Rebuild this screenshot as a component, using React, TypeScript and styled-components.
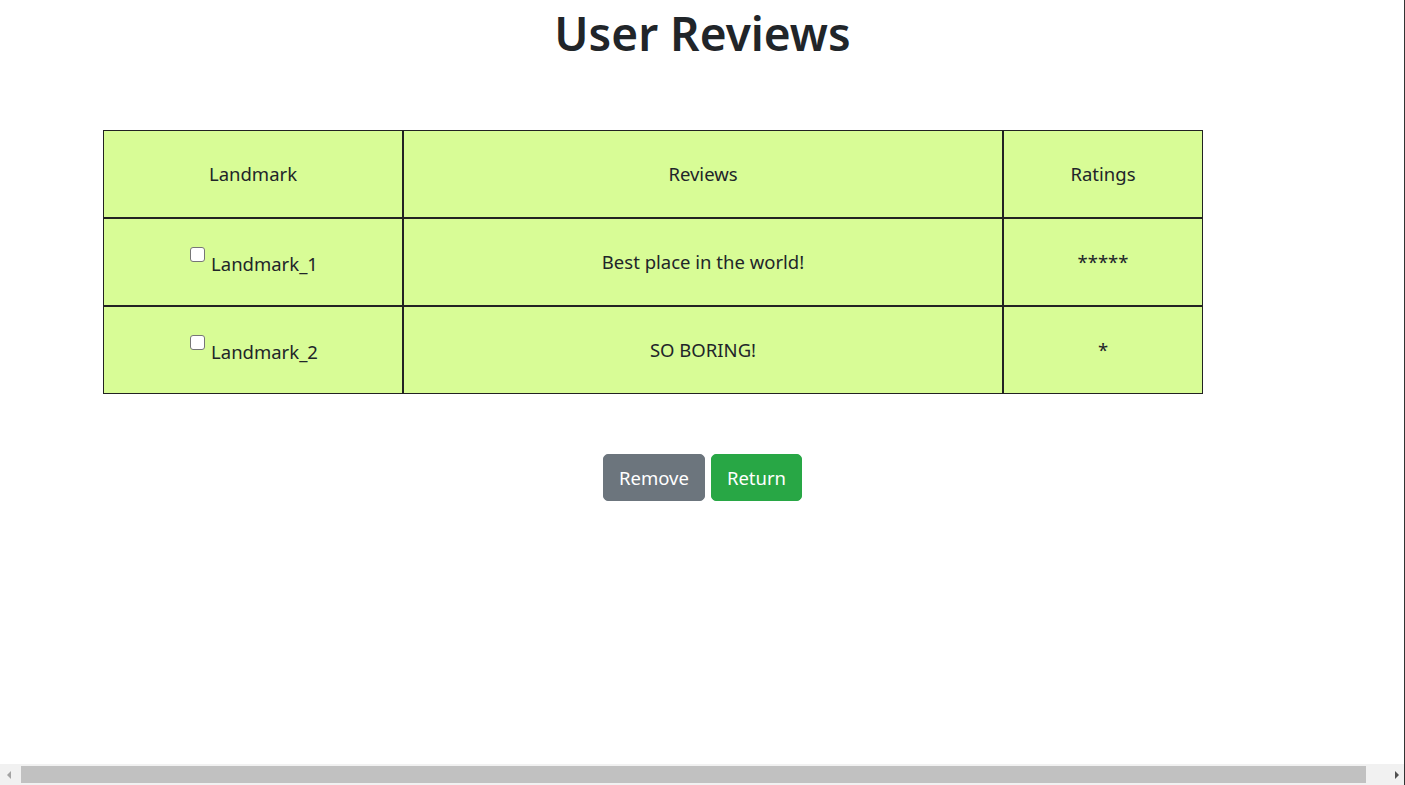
import styled, { createGlobalStyle } from "styled-components";

const GlobalStyle = createGlobalStyle`
  html, body {
    margin: 0;
    padding: 0;
    background: #fff;
  }
  body {
    font-family: "Noto Sans", "Open Sans", sans-serif;
    font-size: 18.5px;
    line-height: 1.5;
    color: #212529;
  }
`;

const reviews = [
  { id: 1, landmark: "Landmark_1", review: "Best place in the world!", rating: 5 },
  { id: 2, landmark: "Landmark_2", review: "SO BORING!", rating: 1 },
];

const Page = styled.div`
  padding-top: 3px;
`;

const Title = styled.h1`
  margin: 0 0 67px;
  font-size: 46px;
  font-weight: 600;
  line-height: 60px;
  text-align: center;
`;

const TableRow = styled.div`
  padding-left: 103px;
`;

const Table = styled.table`
  width: 1100px;
  border-spacing: 0;
  border: 1px solid #222;
  background: #d8fc96;
`;

const Cell = styled.td<{ $w?: number; $last?: boolean; $bottom?: boolean }>`
  width: ${(p) => (p.$w ? `${p.$w}px` : "auto")};
  height: 86px;
  padding: 0;
  text-align: center;
  vertical-align: middle;
  border-right: ${(p) => (p.$last ? "none" : "2px solid #222")};
  border-bottom: ${(p) => (p.$bottom ? "none" : "2px solid #222")};
`;

const Check = styled.input`
  appearance: none;
  width: 15px;
  height: 15px;
  margin: 0 6px 0 2px;
  border: 1px solid #767676;
  border-radius: 3px;
  background: #fff;
  vertical-align: 9px;
`;

const Actions = styled.div`
  display: flex;
  justify-content: center;
  gap: 6px;
  margin-top: 60px;
`;

const Button = styled.button<{ $variant: "secondary" | "success" }>`
  font-family: inherit;
  font-size: 18.5px;
  line-height: 1.5;
  height: 47px;
  padding: 0 15px;
  border: 1px solid ${(p) => (p.$variant === "success" ? "#28a745" : "#6c757d")};
  background: ${(p) => (p.$variant === "success" ? "#28a745" : "#6c757d")};
  color: #fff;
  border-radius: 5px;
  cursor: pointer;
`;

const EdgeLine = styled.div`
  position: fixed;
  top: 0;
  right: 0;
  bottom: 0;
  width: 1px;
  background: #333;
  z-index: 2;
`;

const Scrollbar = styled.div`
  position: fixed;
  left: 0;
  right: 0;
  bottom: 0;
  height: 21px;
  display: flex;
  align-items: center;
  background: #f1f1f1;
`;

const ArrowButton = styled.div<{ $dir: "left" | "right" }>`
  width: 21px;
  height: 21px;
  display: flex;
  align-items: center;
  justify-content: center;

  &::before {
    content: "";
    width: 0;
    height: 0;
    border-top: 4px solid transparent;
    border-bottom: 4px solid transparent;
    ${(p) =>
      p.$dir === "left"
        ? "border-right: 4px solid #a3a3a3; margin-right: 4px;"
        : "border-left: 4px solid #505050; margin-left: 4px;"}
  }
`;

const Thumb = styled.div`
  flex: 1;
  height: 17px;
  margin-right: 18px;
  background: #c1c1c1;
`;

export default function App() {
  return (
    <Page>
      <GlobalStyle />
      <Title>User Reviews</Title>
      <TableRow>
        <Table>
          <tbody>
            <tr>
              <Cell $w={298}>Landmark</Cell>
              <Cell $w={598}>Reviews</Cell>
              <Cell $last>Ratings</Cell>
            </tr>
            {reviews.map((r, i) => {
              const bottom = i === reviews.length - 1;
              return (
                <tr key={r.id}>
                  <Cell $bottom={bottom}>
                    <Check type="checkbox" />
                    {r.landmark}
                  </Cell>
                  <Cell $bottom={bottom}>{r.review}</Cell>
                  <Cell $last $bottom={bottom}>
                    {"*".repeat(r.rating)}
                  </Cell>
                </tr>
              );
            })}
          </tbody>
        </Table>
      </TableRow>
      <Actions>
        <Button $variant="secondary">Remove</Button>
        <Button $variant="success">Return</Button>
      </Actions>
      <Scrollbar>
        <ArrowButton $dir="left" />
        <Thumb />
        <ArrowButton $dir="right" />
      </Scrollbar>
      <EdgeLine />
    </Page>
  );
}
